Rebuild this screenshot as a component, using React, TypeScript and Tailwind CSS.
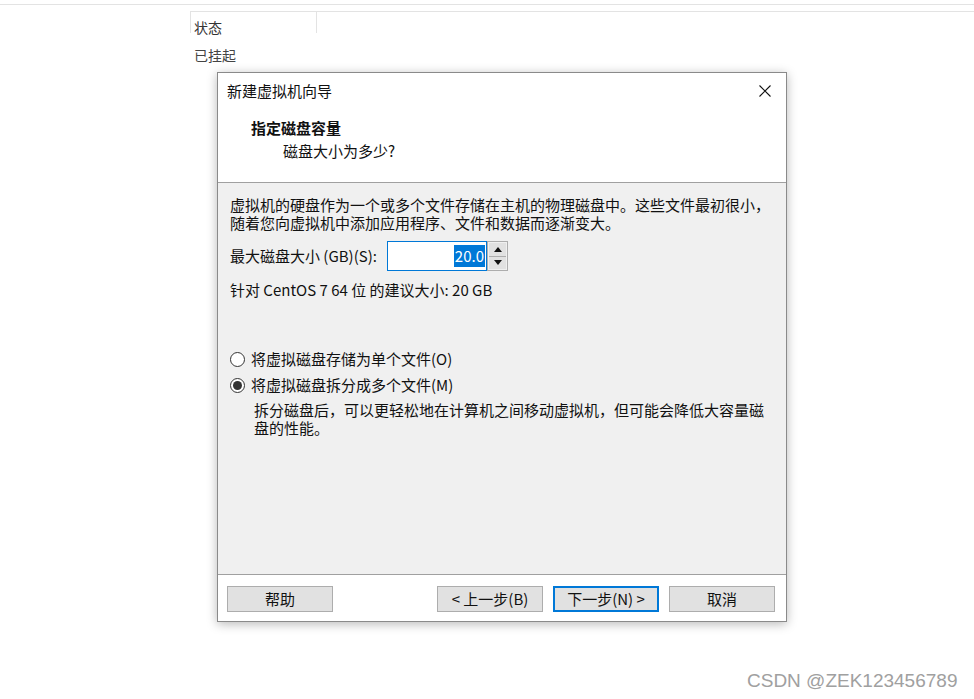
import React from "react";

const font = { fontFamily: '"Noto Sans CJK SC", "Noto Sans", sans-serif' };

function Radio({ checked }: { checked?: boolean }) {
  return (
    <span className="flex h-[15px] w-[15px] shrink-0 items-center justify-center rounded-full border border-[#333] bg-white">
      {checked && <span className="h-[9px] w-[9px] rounded-full bg-[#333]" />}
    </span>
  );
}

function Btn({ label, primary }: { label: string; primary?: boolean }) {
  return (
    <button
      type="button"
      className={
        primary
          ? "flex h-[26px] w-[106px] items-center justify-center border-2 border-[#0078d7] bg-[#e1e1e1] text-[15px] text-[#111]"
          : "flex h-[26px] w-[106px] items-center justify-center border border-[#adadad] bg-[#e1e1e1] text-[15px] text-[#111]"
      }
    >
      {label}
    </button>
  );
}

export default function App() {
  return (
    <div className="relative h-[699px] w-[974px] overflow-hidden bg-white text-[#111]" style={font}>
      {/* background list behind the wizard */}
      <div className="mt-[4px] h-px w-full bg-[#e3e3e3]" />
      <div className="ml-[190px] mt-[6px] h-px bg-[#e3e3e3]" />
      <div className="ml-[190px] flex h-[21px] w-[127px] border-x border-[#e3e3e3]">
        <span className="ml-[3px] mt-[6px] text-[14px] leading-[18px] text-[#333]">状态</span>
      </div>
      <div className="ml-[194px] mt-[13px] text-[14px] leading-[18px] text-[#444]">已挂起</div>

      {/* wizard window */}
      <div className="ml-[217px] mt-[8px] flex h-[550px] w-[570px] flex-col border border-[#8a8a8a] bg-white shadow-[0_2px_10px_rgba(0,0,0,0.28)]">
        <div className="flex h-[36px] items-center pl-[9px] pr-[14px]">
          <span className="text-[15px] leading-[18px]">新建虚拟机向导</span>
          <svg className="ml-auto" width="14" height="14" viewBox="0 0 14 14">
            <path d="M1.5 1.5 L12.5 12.5 M12.5 1.5 L1.5 12.5" stroke="#111" strokeWidth="1.1" fill="none" />
          </svg>
        </div>

        <div className="flex h-[73px] flex-col pl-[33px] pt-[10px]">
          <span className="text-[15px] font-bold leading-[18px]">指定磁盘容量</span>
          <span className="ml-[32px] mt-[5px] text-[15px] leading-[18px]">磁盘大小为多少?</span>
        </div>

        <div className="flex h-[393px] flex-col border-y border-[#a0a0a0] bg-[#f0f0f0] pl-[12px] pt-[13px] text-[15px] leading-[18px]">
          <p>虚拟机的硬盘作为一个或多个文件存储在主机的物理磁盘中。这些文件最初很小，</p>
          <p>随着您向虚拟机中添加应用程序、文件和数据而逐渐变大。</p>

          <div className="mt-[9px] flex h-[30px] items-center">
            <span className="w-[157px] shrink-0">最大磁盘大小 (GB)(S):</span>
            <div className="flex h-[30px] w-[100px] items-center justify-end border border-[#0078d7] bg-white pr-[1px]">
              <span className="flex h-[22px] items-center bg-[#0078d7] px-[1px] text-white">20.0</span>
            </div>
            <div className="flex h-[30px] w-[21px] flex-col border border-[#adadad] bg-[#f0f0f0] p-px">
              <div className="flex flex-1 items-center justify-center border-b border-[#adadad] bg-[#e1e1e1]">
                <svg width="8" height="5" viewBox="0 0 8 5"><path d="M0 5 L4 0 L8 5 Z" fill="#111" /></svg>
              </div>
              <div className="flex flex-1 items-center justify-center bg-[#e1e1e1]">
                <svg width="8" height="5" viewBox="0 0 8 5"><path d="M0 0 L8 0 L4 5 Z" fill="#111" /></svg>
              </div>
            </div>
          </div>

          <p className="mt-[10px]">针对 CentOS 7 64 位 的建议大小: 20 GB</p>

          <div className="mt-[51px] flex items-center gap-[6px]">
            <Radio />
            <span>将虚拟磁盘存储为单个文件(O)</span>
          </div>
          <div className="mt-[8px] flex items-center gap-[6px]">
            <Radio checked />
            <span>将虚拟磁盘拆分成多个文件(M)</span>
          </div>
          <p className="ml-[24px] mt-[7px] w-[520px]">
            拆分磁盘后，可以更轻松地在计算机之间移动虚拟机，但可能会降低大容量磁盘的性能。
          </p>
        </div>

        <div className="flex flex-1 items-start pl-[9px] pr-[11px] pt-[11px]">
          <Btn label="帮助" />
          <div className="ml-auto flex gap-[10px]">
            <Btn label="< 上一步(B)" />
            <Btn label="下一步(N) >" primary />
            <Btn label="取消" />
          </div>
        </div>
      </div>

      <span
        className="absolute left-[747px] top-[669px] text-[19px] leading-[24px] text-[#a0a0a0]"
        style={{ fontFamily: '"Liberation Sans", Arial, sans-serif' }}
      >
        CSDN @ZEK123456789
      </span>
    </div>
  );
}
